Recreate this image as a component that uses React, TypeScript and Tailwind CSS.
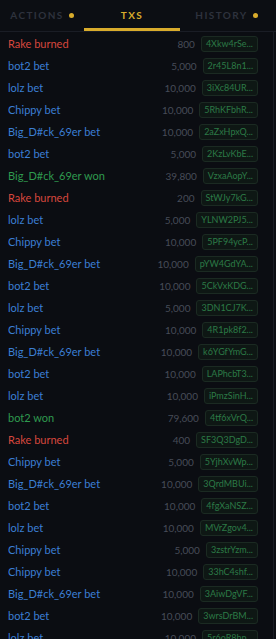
import React from "react";

type Kind = "burn" | "bet" | "won";

const rows: [string, Kind, string, string][] = [
  ["Rake burned", "burn", "800", "4Xkw4rSe..."],
  ["bot2 bet", "bet", "5,000", "2r45L8n1..."],
  ["lolz bet", "bet", "10,000", "3iXc84UR..."],
  ["Chippy bet", "bet", "10,000", "5RhKFbhR..."],
  ["Big_D#ck_69er bet", "bet", "10,000", "2aZxHpxQ..."],
  ["bot2 bet", "bet", "5,000", "2KzLvKbE..."],
  ["Big_D#ck_69er won", "won", "39,800", "VzxaAopY..."],
  ["Rake burned", "burn", "200", "StWJy7kG..."],
  ["lolz bet", "bet", "5,000", "YLNW2PJ5..."],
  ["Chippy bet", "bet", "10,000", "5PF94ycP..."],
  ["Big_D#ck_69er bet", "bet", "10,000", "pYW4GdYA..."],
  ["bot2 bet", "bet", "10,000", "5CkVxKDG..."],
  ["lolz bet", "bet", "5,000", "3DN1CJ7K..."],
  ["Chippy bet", "bet", "10,000", "4R1pk8f2..."],
  ["Big_D#ck_69er bet", "bet", "10,000", "k6YGfYmG..."],
  ["bot2 bet", "bet", "10,000", "LAPhcbT3..."],
  ["lolz bet", "bet", "10,000", "iPmzSinH..."],
  ["bot2 won", "won", "79,600", "4tf6xVrQ..."],
  ["Rake burned", "burn", "400", "SF3Q3DgD..."],
  ["Chippy bet", "bet", "5,000", "5YjhXvWp..."],
  ["Big_D#ck_69er bet", "bet", "10,000", "3QrdMBUi..."],
  ["bot2 bet", "bet", "10,000", "4fgXaNSZ..."],
  ["lolz bet", "bet", "10,000", "MVrZgov4..."],
  ["Chippy bet", "bet", "5,000", "3zstrYzm..."],
  ["Chippy bet", "bet", "10,000", "33hC4shf..."],
  ["Big_D#ck_69er bet", "bet", "10,000", "3AiwDgVF..."],
  ["bot2 bet", "bet", "10,000", "3wrsDrBM..."],
  ["lolz bet", "bet", "10,000", "5r6oR8hp..."],
];

const labelColor: Record<Kind, string> = {
  burn: "text-[#d8473d]",
  bet: "text-[#3b7fd4]",
  won: "text-[#2f9a4f]",
};

function Tab({ label, active, dot, w }: { label: string; active?: boolean; dot?: boolean; w: string }) {
  return (
    <div className={`${w} h-full flex items-center justify-center relative`}>
      <span
        className={`text-[10px] font-bold tracking-[0.14em] ${active ? "text-[#d9ac2c]" : "text-[#2e323d]"}`}
      >
        {label}
      </span>
      {dot && <span className="ml-[5px] w-[5px] h-[5px] rounded-full bg-[#d9ac2c]" />}
      {active && <div className="absolute left-0 right-0 bottom-0 h-[3px] bg-[#d9ac2c]" />}
    </div>
  );
}

export default function App() {
  return (
    <div
      className="w-[276px] h-[639px] overflow-hidden bg-[#0b0d12]"
      style={{ fontFamily: 'Lato, "Open Sans", sans-serif' }}
    >
      <div className="flex h-[32px] border-b border-[#1a1d25] bg-[#0c0e13]">
        <Tab label="ACTIONS" dot w="w-[84px]" />
        <Tab label="TXS" active w="w-[96px]" />
        <Tab label="HISTORY" dot w="w-[93px]" />
      </div>
      <div className="w-[274px] border-r border-[#1a1d25] pt-[1px]">
        {rows.map(([label, kind, amount, hash], i) => (
          <div key={i} className="h-[22px] flex items-center pl-[8px] pr-[15px]">
            <span className={`text-[11px] flex-1 truncate ${labelColor[kind]}`}>{label}</span>
            <span className="text-[10px] text-[#474c58] mr-[6px]">{amount}</span>
            <span className="h-[16px] px-[4px] flex items-center rounded-[3px] border border-[#1b2a22] bg-[#0e1714] text-[9px] text-[#2c7a46]">
              {hash}
            </span>
          </div>
        ))}
      </div>
    </div>
  );
}
